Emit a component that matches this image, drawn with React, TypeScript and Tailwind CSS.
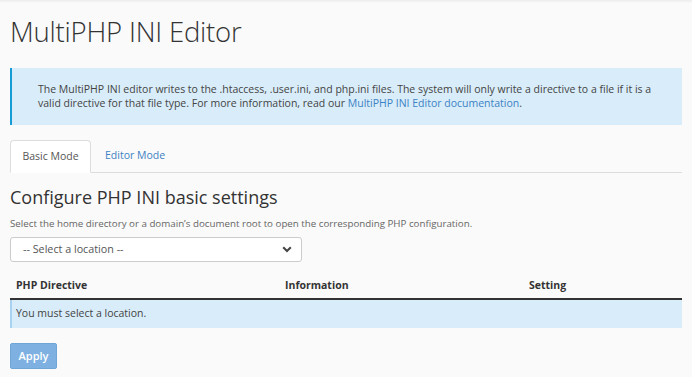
import React from "react";

export default function App() {
  return (
    <div
      className="min-h-[377px] w-full bg-[#fafafa] text-[#333] relative"
      style={{ fontFamily: '"Open Sans", "Liberation Sans", sans-serif' }}
    >
      <div className="absolute top-0 left-0 right-0 h-[3px] bg-gradient-to-b from-[#ececec] to-[#fafafa]" />
      <div className="px-[10px] pt-[12px]">
        <h1 className="text-[27.5px] font-light leading-[40px] text-[#333] tracking-[-0.2px]">
          MultiPHP INI Editor
        </h1>
        <div className="mt-[16px] bg-[#d8ecf9] border-l-[2px] border-[#169bd5] h-[57px] pl-[26px] pr-[20px] pt-[14px] text-[10.5px] leading-[14px] text-[#444]">
          The MultiPHP INI editor writes to the .htaccess, .user.ini, and php.ini files. The system will only write a directive to a file if it is a valid directive for that file type. For more information, read our{" "}
          <a className="text-[#3c82c4]">MultiPHP INI Editor documentation</a>.
        </div>
        <div className="mt-[15px] flex border-b border-[#dddddd] h-[33px]">
          <div className="w-[81px] h-[33px] -mb-px bg-white border border-[#dddddd] border-b-white rounded-t-[4px] flex items-center justify-center text-[10.5px] text-[#555]">
            Basic Mode
          </div>
          <div className="px-[14px] flex items-center text-[10.5px] text-[#3c82c4]">Editor Mode</div>
        </div>
        <h2 className="mt-[11px] text-[18px] leading-[26px] text-[#333]">
          Configure PHP INI basic settings
        </h2>
        <p className="mt-[7px] text-[9.75px] leading-[14px] text-[#666]">
          Select the home directory or a domain’s document root to open the corresponding PHP configuration.
        </p>
        <div className="mt-[6px] w-[292px] h-[25px] bg-white border border-[#cccccc] rounded-[3px] flex items-center justify-between pl-[12px] pr-[9px] text-[10.75px] text-[#555]">
          <span>-- Select a location --</span>
          <svg width="10" height="7" viewBox="0 0 10 7">
            <path d="M1.2 1.2 L5 5 L8.8 1.2" stroke="#444" strokeWidth="2" fill="none" />
          </svg>
        </div>
        <div className="mt-[12px] text-[10.5px]">
          <div className="flex h-[26px] items-center border-b-[2px] border-[#333] font-bold text-[#333]">
            <div className="w-[269px] pl-[6px]">PHP Directive</div>
            <div className="w-[244px] pl-[6px]">Information</div>
            <div className="flex-1 pl-[6px]">Setting</div>
          </div>
          <div className="h-[28px] bg-[#d8ecf9] border-l-[2px] border-[#a7d3f0] flex items-center pl-[4px] text-[#444]">
            You must select a location.
          </div>
        </div>
        <button className="mt-[15px] w-[47px] h-[26px] bg-[#7eb1e1] border border-[#6fa6d8] rounded-[2px] text-white text-[11px] font-semibold">
          Apply
        </button>
      </div>
    </div>
  );
}
